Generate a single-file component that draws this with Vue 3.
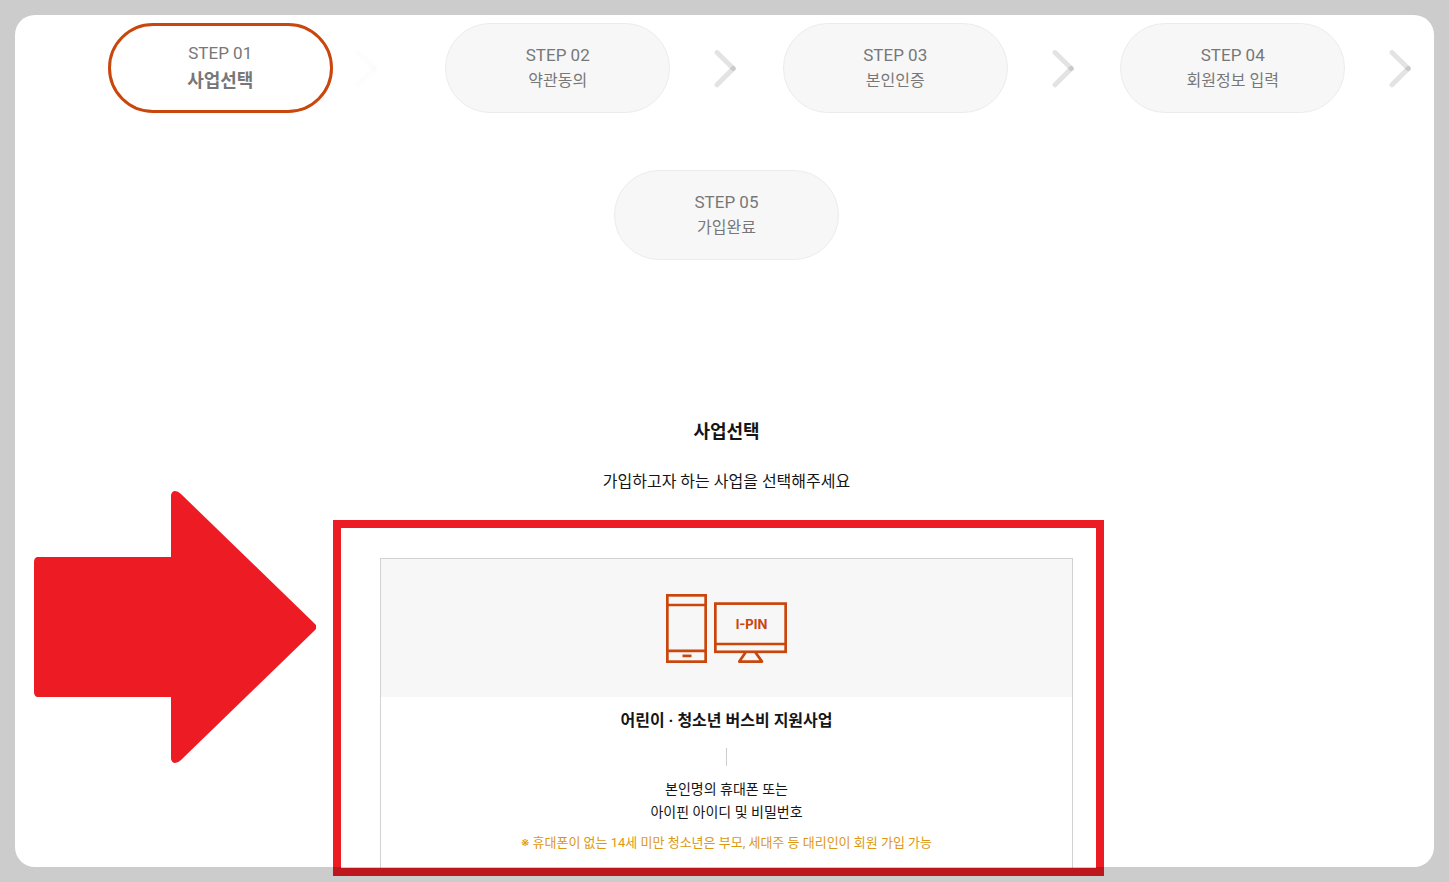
<script setup>
const steps = [
  { no: 'STEP 01', label: '사업선택', active: true, arrow: 'faded' },
  { no: 'STEP 02', label: '약관동의', arrow: 'shown' },
  { no: 'STEP 03', label: '본인인증', arrow: 'shown' },
  { no: 'STEP 04', label: '회원정보 입력', arrow: 'shown' },
  { no: 'STEP 05', label: '가입완료' },
]
</script>

<template>
  <div class="page">
    <main class="content">
      <ol class="steps">
        <li v-for="step in steps" :key="step.no" class="step">
          <div class="pill" :class="{ active: step.active }" :aria-current="step.active ? 'step' : null">
            <span class="no">{{ step.no }}</span>
            <span class="label">{{ step.label }}</span>
            <svg v-if="step.arrow" class="chevron" :class="step.arrow" viewBox="0 0 22 38" aria-hidden="true">
              <path d="M3 2.5 L19.3 18.5" />
              <path d="M3 34.8 L19.3 18.5" />
            </svg>
          </div>
        </li>
      </ol>

      <h1 class="title">사업선택</h1>
      <p class="lead">가입하고자 하는 사업을 선택해주세요</p>

      <div class="choice">
        <section class="card">
          <div class="card-head">
            <svg class="devices" viewBox="0 0 121 69" role="img" aria-label="I-PIN">
              <g fill="none" stroke="#c9460c" stroke-width="2.7">
                <rect x="1.35" y="1.35" width="38.3" height="66.3" />
                <path d="M1 11H40M1 56.8H40" />
                <path d="M16.5 61.9H25.5" />
                <rect x="49.35" y="9.6" width="70.3" height="48.2" />
                <path d="M49 50H120" />
                <path d="M79.5 58.5L73.3 67.6H96L89.5 58.5" stroke-linejoin="round" />
              </g>
              <text x="85.5" y="35" text-anchor="middle">I-PIN</text>
            </svg>
          </div>
          <h2 class="card-title">어린이 · 청소년 버스비 지원사업</h2>
          <p class="desc">본인명의 휴대폰 또는<br>아이핀 아이디 및 비밀번호</p>
          <p class="note"><span class="mark">※</span> 휴대폰이 없는 14세 미만 청소년은 부모, 세대주 등 대리인이 회원 가입 가능</p>
        </section>
        <div class="highlight"></div>
        <svg class="pointer" viewBox="0 0 283 274" aria-hidden="true">
          <path d="M3 67H137V5Q138 1 141 1Q144 1 147 4L279 132L282 135V139L279 142L147 270Q144 273 141 273Q138 273 137 269V207H3Q0 206 0 202V72Q0 68 3 67Z" fill="#ed1c24" />
        </svg>
      </div>
    </main>
  </div>
</template>

<style>
body {
  margin: 0;
  background: #fff;
}
</style>

<style scoped>
.page {
  position: relative;
  box-sizing: border-box;
  height: 100vh;
  overflow: hidden;
  padding: 23px 0 0 4px;
  background: #fff;
  color: #151515;
  font-family: Roboto, "Noto Sans CJK KR", sans-serif;
  text-align: center;
}
.page::after {
  content: "";
  position: absolute;
  inset: 15px;
  border-radius: 20px;
  box-shadow: 0 0 0 40px rgba(0, 0, 0, 0.2);
  pointer-events: none;
}
.content {
  max-width: 1350px;
  margin: 0 auto;
}
.steps {
  display: flex;
  flex-wrap: wrap;
  justify-content: center;
  row-gap: 57px;
  margin: 0;
  padding: 0;
  list-style: none;
}
.step {
  display: flex;
  justify-content: center;
  flex: 0 0 25%;
}
.pill {
  position: relative;
  box-sizing: border-box;
  display: flex;
  flex-direction: column;
  justify-content: center;
  width: 225px;
  height: 90px;
  border: 1px solid #ececec;
  border-radius: 45px;
  background: #f7f7f7;
  color: #777;
}
.pill.active {
  border: 3px solid #c9460c;
  background: #fff;
}
.no {
  font-size: 17px;
  line-height: 26px;
}
.label {
  font-size: 16px;
  line-height: 26px;
}
.active .label {
  font-size: 18px;
  font-weight: 700;
  line-height: 30px;
}
.chevron {
  position: absolute;
  top: 26px;
  left: 268px;
  width: 22px;
  height: 38px;
  fill: none;
  stroke: rgba(0, 0, 0, 0.11);
  stroke-width: 5;
  stroke-linecap: round;
}
.chevron.faded {
  top: 24px;
  left: 244px;
  opacity: 0.06;
}
.title {
  margin: 157px 0 23px;
  font-size: 18px;
  font-weight: 700;
  line-height: 30px;
}
.lead {
  margin: 0 0 64px;
  font-size: 16px;
  line-height: 24px;
}
.choice {
  position: relative;
  max-width: 693px;
  margin: 0 auto;
}
.card {
  border: 1px solid #d2d2d2;
  padding-bottom: 20px;
}
.card-head {
  display: flex;
  align-items: center;
  justify-content: center;
  height: 138px;
  background: #f7f7f7;
}
.devices {
  width: 121px;
  height: 69px;
}
.devices text {
  fill: #c9460c;
  font-family: Inter, sans-serif;
  font-size: 13px;
  font-weight: 700;
}
.card-title {
  margin: 12px 0 0;
  font-size: 16px;
  font-weight: 700;
  line-height: 24px;
}
.card-title::after {
  content: "";
  display: block;
  width: 1px;
  height: 18px;
  margin: 15px auto 12px;
  background: #ccc;
}
.desc {
  margin: 0 0 8px;
  font-size: 14px;
  line-height: 23px;
}
.note {
  margin: 0;
  color: #dd9710;
  font-size: 13px;
  line-height: 22px;
}
.mark {
  font-family: Inter, sans-serif;
  line-height: 1;
}
.highlight {
  position: absolute;
  inset: -38px -31px -1px -47px;
  border: 8px solid #ed1c24;
}
.pointer {
  position: absolute;
  top: -68px;
  left: -346px;
  width: 283px;
  height: 274px;
}
</style>
